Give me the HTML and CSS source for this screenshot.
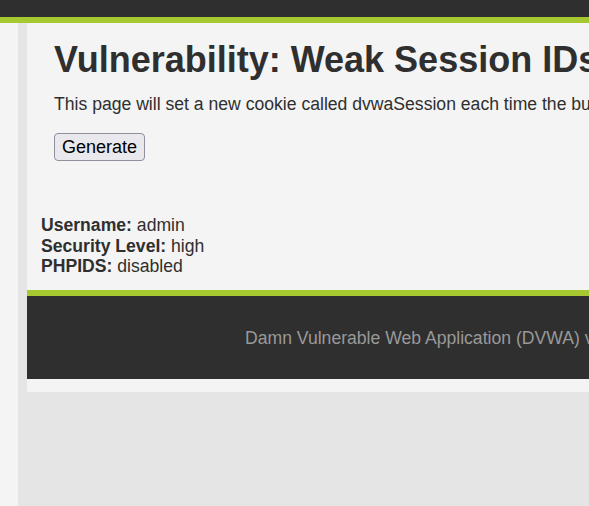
FILE: index.html
```html
<!DOCTYPE html>
<html>
<head>
<meta charset="utf-8">
<link rel="stylesheet" href="styles.css">
</head>
<body>
<div class="header"></div>
<div class="wrapper">
  <div class="container">
    <div class="main">
      <h1>Vulnerability: Weak Session IDs</h1>
      <p class="intro">This page will set a new cookie called dvwaSession each time the button is clicked.</p>
      <form class="form"><button type="button" class="btn">Generate</button></form>
      <div class="info">
        <div><b>Username:</b> admin</div>
        <div><b>Security Level:</b> high</div>
        <div><b>PHPIDS:</b> disabled</div>
      </div>
    </div>
    <div class="footer">
      <p>Damn Vulnerable Web Application (DVWA) v1.10 *Development*</p>
    </div>
  </div>
</div>
</body>
</html>
```
FILE: styles.css
```css
html, body {
  margin: 0;
  padding: 0;
  height: 100%;
  overflow: hidden;
}
body {
  background: #f4f4f4;
  font-family: "Liberation Sans", Arial, sans-serif;
  color: #2f2f2f;
  display: flex;
  flex-direction: column;
}
.header {
  height: 17px;
  background: #2f2f2f;
  border-bottom: 6px solid #a6c932;
  flex: none;
}
.wrapper {
  flex: 1;
  margin-left: 18px;
  padding-left: 9px;
  background: #e5e5e5;
}
.container {
  background: #f4f4f4;
  padding-bottom: 13px;
  width: 1200px;
}
.main {
  padding: 16px 0 13.5px 14px;
}
h1 {
  margin: 0 0 0 13px;
  font-size: 36px;
  line-height: 42px;
  font-weight: bold;
  white-space: nowrap;
}
.intro {
  margin: 13px 0 0 13px;
  font-size: 17.6px;
  line-height: 20px;
  white-space: nowrap;
}
.form {
  margin: 19px 0 0 13px;
}
.btn {
  font-family: "Liberation Sans", Arial, sans-serif;
  font-size: 18px;
  color: #000;
  background: #e9e9ed;
  border: 1px solid #8f8f9d;
  border-radius: 4px;
  padding: 2px 7px;
  height: 28px;
  line-height: 22px;
}
.info {
  margin-top: 54px;
  font-size: 17.6px;
  line-height: 20.5px;
}
.footer {
  background: #2f2f2f;
  border-top: 6px solid #a6c932;
  height: 83px;
  display: flex;
  align-items: center;
}
.footer p {
  margin: 0;
  padding-left: 218px;
  color: #999;
  font-size: 17.6px;
  line-height: 20px;
  padding-top: 1px;
  white-space: nowrap;
}
```
